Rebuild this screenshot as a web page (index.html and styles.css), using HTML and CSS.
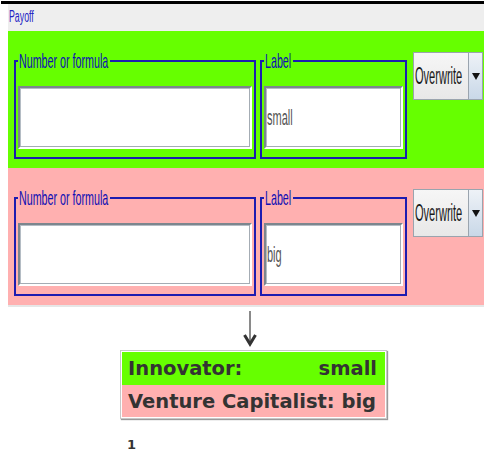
FILE: index.html
```html
<!DOCTYPE html>
<html lang="en">
<head>
    <meta charset="UTF-8">
    <title>Payoff</title>
    <link rel="stylesheet" href="styles.css">
</head>
<body>

    <div class="frame">
        <div class="title-bar"><span class="narrow">Payoff</span></div>

        <!-- innovator row -->
        <div class="panel panel-green">
            <fieldset class="box box-formula">
                <legend class="legend-formula"><span class="narrow">Number or formula</span></legend>
                <div class="field"></div>
            </fieldset>
            <fieldset class="box box-label">
                <legend class="legend-label"><span class="narrow">Label</span></legend>
                <div class="field"><span class="narrow field-text">small</span></div>
            </fieldset>
            <div class="combo">
                <div class="combo-text"><span class="narrow">Overwrite</span></div>
                <div class="combo-arrow"><span class="triangle"></span></div>
            </div>
        </div>

        <!-- venture capitalist row -->
        <div class="panel panel-pink">
            <fieldset class="box box-formula">
                <legend class="legend-formula"><span class="narrow">Number or formula</span></legend>
                <div class="field"></div>
            </fieldset>
            <fieldset class="box box-label">
                <legend class="legend-label"><span class="narrow">Label</span></legend>
                <div class="field"><span class="narrow field-text">big</span></div>
            </fieldset>
            <div class="combo">
                <div class="combo-text"><span class="narrow">Overwrite</span></div>
                <div class="combo-arrow"><span class="triangle"></span></div>
            </div>
        </div>
    </div>

    <div class="result">
        <div class="down-arrow">
            <svg width="14" height="36" viewBox="0 0 14 36">
                <line x1="7" y1="0" x2="7" y2="32" stroke="#8a8a8a" stroke-width="2"/>
                <polyline points="1.5,24 7,33 12.5,24" fill="none" stroke="#333" stroke-width="3"/>
            </svg>
        </div>
        <div class="card">
            <div class="row row-green"><span>Innovator:</span><span>small</span></div>
            <div class="row row-pink"><span>Venture Capitalist: big</span></div>
        </div>
        <div class="count">1</div>
    </div>

</body>
</html>
```

FILE: styles.css
```css
body {
    margin: 0;
    background: #fff;
    font-family: "Liberation Sans", Arial, sans-serif;
}
.narrow {
    display: inline-block;
    white-space: nowrap;
    transform: scaleX(0.55);
    transform-origin: 0 50%;
}
.frame {
    margin: 1px 0 0 1px;
    border-top: 3px solid #000;
    padding-left: 7px;
}
.title-bar {
    height: 27px;
    background: #eeeeee;
    padding-left: 1px;
    font-size: 16px;
    line-height: 26px;
    color: #2323c4;
}
.title-bar .narrow {
    transform: scaleX(0.55);
}
.panel {
    height: 137px;
    box-sizing: border-box;
    padding: 21px 0 0 6px;
    display: flex;
    align-items: flex-start;
}
.panel-green {
    background: #66ff00;
}
.panel-pink {
    background: #ffb0b0;
    border-bottom: 2px solid #e6e6e6;
    height: 139px;
}
.box {
    margin: 0;
    padding: 17px 2px 8px 2px;
    border: 2px solid #1c1cb0;
    box-sizing: border-box;
    min-width: 0;
}
.box-formula {
    width: 242px;
    margin-right: 4px;
}
.box-label {
    width: 147px;
    margin-right: 6px;
}
legend {
    padding: 0 1px;
    height: 17px;
    font-size: 21px;
    line-height: 17px;
    color: #0f0fb4;
    white-space: nowrap;
}
.panel-green legend {
    background: #66ff00;
}
.panel-pink legend {
    background: #ffb0b0;
}
legend .narrow {
    transform: scaleX(0.51);
}
.legend-formula {
    width: 90px;
}
.legend-label {
    width: 27px;
}
.field {
    height: 63px;
    box-sizing: border-box;
    background: #fff;
    border: 2px solid;
    border-color: #7c868e #fff #fff #7c868e;
    box-shadow: inset -1px -1px 0 #a4acb4, inset 1px 1px 0 #b4bcc4;
    display: flex;
    align-items: center;
    padding-left: 1px;
}
.field-text {
    font-size: 22px;
    color: #555;
    transform: scaleX(0.5);
}
.combo {
    width: 70px;
    height: 48px;
    box-sizing: border-box;
    border: 1px solid #9aa4ae;
    display: flex;
}
.combo-text {
    width: 53px;
    background: linear-gradient(#f6f6f6, #e8e8e8);
    display: flex;
    align-items: center;
    padding-left: 1px;
    font-size: 23px;
    color: #1a1a1a;
}
.combo-text .narrow {
    transform: scaleX(0.48);
}
.combo-arrow {
    flex: 1;
    border-left: 1px solid #9aa4ae;
    background: linear-gradient(#eef2f7, #c9d8e8);
    display: flex;
    align-items: center;
    justify-content: center;
}
.triangle {
    width: 0;
    height: 0;
    border-left: 4px solid transparent;
    border-right: 4px solid transparent;
    border-top: 7px solid #111;
}
.result {
    padding-left: 120px;
}
.down-arrow {
    margin: 4px 0 0 123px;
    height: 39px;
}
.down-arrow svg {
    display: block;
}
.card {
    width: 267px;
    box-sizing: border-box;
    border: 1px solid #c8c8c8;
    padding: 1px;
    box-shadow: 1px 1px 1px #9a9a9a;
    font-family: "DejaVu Sans", sans-serif;
    font-weight: bold;
    font-size: 19.5px;
    color: #333;
}
.row {
    display: flex;
    justify-content: space-between;
    padding: 0 8px 0 6px;
    height: 33px;
    align-items: center;
}
.row-green {
    background: #66ff00;
}
.row-pink {
    background: #ffb0b0;
    height: 32px;
}
.count {
    margin: 18px 0 0 7px;
    font-family: "DejaVu Sans", sans-serif;
    font-weight: bold;
    font-size: 13px;
    color: #333;
}
```
